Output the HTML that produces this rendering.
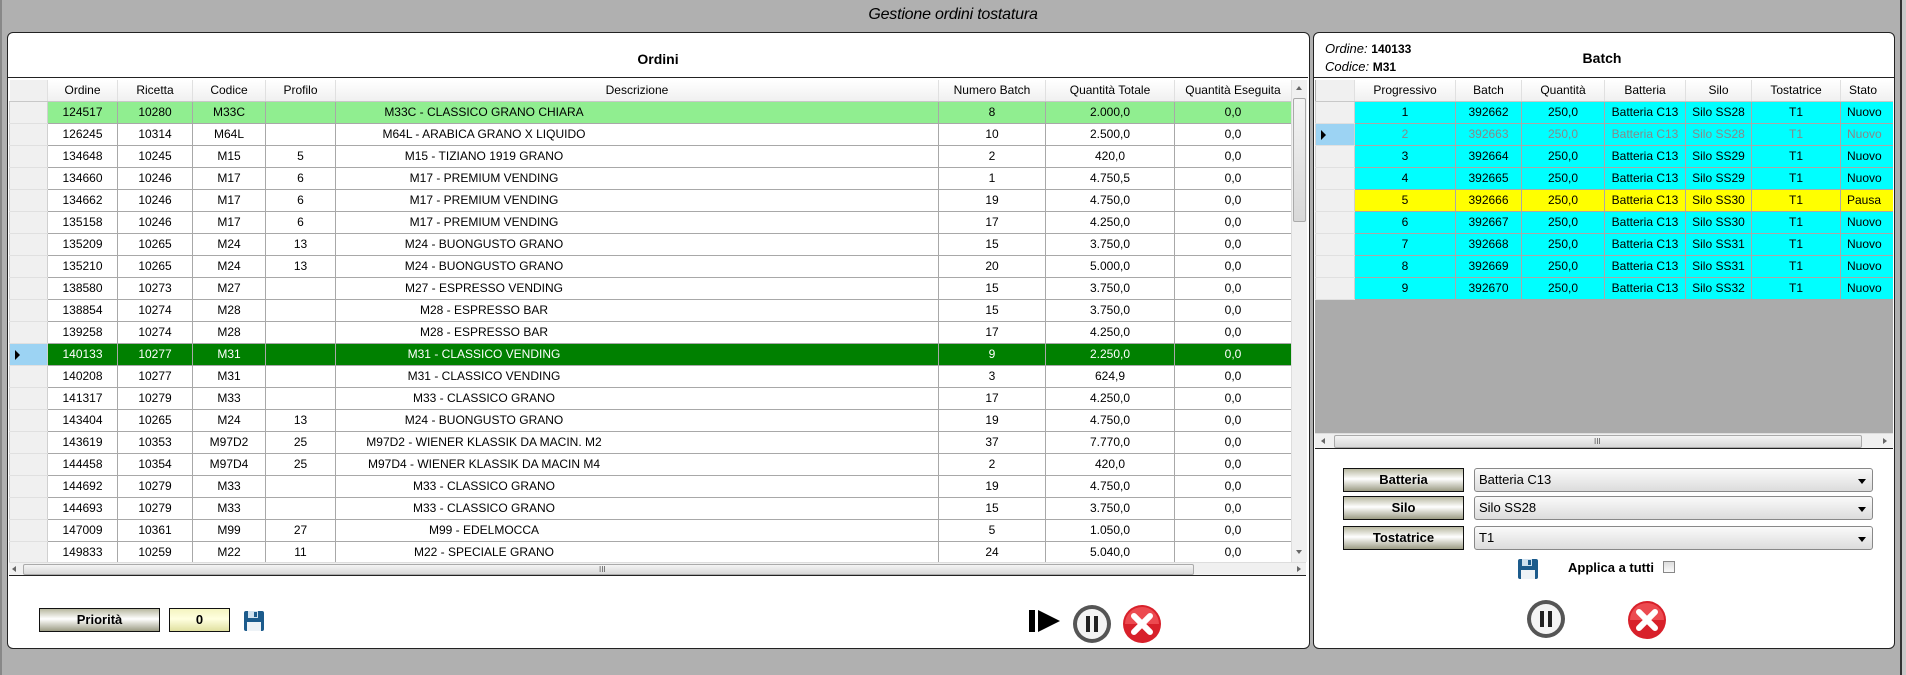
<!DOCTYPE html>
<html><head><meta charset="utf-8">
<style>
*{box-sizing:border-box;margin:0;padding:0}
body{width:1906px;height:675px;background:#b0b0b0;font-family:"Liberation Sans",sans-serif;font-size:12px;color:#000;position:relative;overflow:hidden}
.abs{position:absolute}
.title{left:0;width:1906px;top:6px;text-align:center;font-style:italic;font-size:16px;letter-spacing:-0.2px}
.panel{background:#fff;border:1.5px solid #222;border-radius:6px;overflow:hidden}
table{border-collapse:collapse;table-layout:fixed;position:absolute}
td{border:1px solid #a8a8a8;height:22px;text-align:center;white-space:nowrap;overflow:hidden;padding:0;font-size:12px}
th{font-weight:normal;height:21px;border-right:1px solid #e0e0e0;border-bottom:1px solid #c8c8c8;background:linear-gradient(#fff,#f0f0f0);white-space:nowrap;overflow:hidden;font-size:12px}
td.rh{background:#f0f0f0;border-color:#e0e0e0 #d0d0d0;position:relative}
td.sel{background:#9cd3f3}
td.sel:before{content:"";position:absolute;left:5px;top:6px;border-left:5px solid #000;border-top:5px solid transparent;border-bottom:5px solid transparent}
tr.g td{background:#90ee90}
tr.dg td{background:#008000;color:#fff}
tr.c td{background:#00ffff}
tr.y td{background:#ffff00}
tr.gr td{color:#888}
tr td.rh{background:#f0f0f0;color:#000}
tr td.rh.sel{background:#9cd3f3}
.desc{display:block;width:280px;margin-left:8px;text-align:center}
.hs{background:#f0f0f0;border-top:1px solid #ddd}
.thumb{background:linear-gradient(#f4f4f4,#d8d8d8);border:1px solid #aaa;border-radius:2px}
.btn{border:1.5px solid #111;background:linear-gradient(#b8b8a0,#fff 45%,#9c9c84);font-weight:bold;text-align:center;font-size:13px}
.combo{border:1px solid #888;border-radius:3px;background:linear-gradient(#fafafa,#dcdcdc);padding-left:4px;font-size:13px;line-height:22px}
.combo:after{content:"";position:absolute;right:6px;top:10px;border-top:5px solid #000;border-left:4px solid transparent;border-right:4px solid transparent}
</style></head><body>
<div class="abs title">Gestione ordini tostatura</div>

<div class="abs panel" style="left:7px;top:32px;width:1303px;height:617px">
  <div class="abs" style="left:0;top:0;width:1300px;height:45px;border-bottom:1.5px solid #222;text-align:center;font-weight:bold;font-size:14px;line-height:52px">Ordini</div>
</div>
<div class="abs" style="left:9px;top:80px;width:1282px;height:482px;overflow:hidden;background:#fff">
<table style="left:0;top:0;width:1282px">
<colgroup><col style="width:38px"><col style="width:70px"><col style="width:75px"><col style="width:73px"><col style="width:70px"><col style="width:603px"><col style="width:107px"><col style="width:129px"><col style="width:117px"></colgroup>
<tr><th style="background:#f0f0f0"></th><th>Ordine</th><th>Ricetta</th><th>Codice</th><th>Profilo</th><th>Descrizione</th><th>Numero Batch</th><th>Quantità Totale</th><th>Quantità Eseguita</th></tr>
<tr class="g"><td class="rh"></td><td>124517</td><td>10280</td><td>M33C</td><td></td><td><span class="desc">M33C - CLASSICO GRANO CHIARA</span></td><td>8</td><td>2.000,0</td><td>0,0</td></tr>
<tr><td class="rh"></td><td>126245</td><td>10314</td><td>M64L</td><td></td><td><span class="desc">M64L - ARABICA GRANO X LIQUIDO</span></td><td>10</td><td>2.500,0</td><td>0,0</td></tr>
<tr><td class="rh"></td><td>134648</td><td>10245</td><td>M15</td><td>5</td><td><span class="desc">M15 - TIZIANO 1919 GRANO</span></td><td>2</td><td>420,0</td><td>0,0</td></tr>
<tr><td class="rh"></td><td>134660</td><td>10246</td><td>M17</td><td>6</td><td><span class="desc">M17 - PREMIUM VENDING</span></td><td>1</td><td>4.750,5</td><td>0,0</td></tr>
<tr><td class="rh"></td><td>134662</td><td>10246</td><td>M17</td><td>6</td><td><span class="desc">M17 - PREMIUM VENDING</span></td><td>19</td><td>4.750,0</td><td>0,0</td></tr>
<tr><td class="rh"></td><td>135158</td><td>10246</td><td>M17</td><td>6</td><td><span class="desc">M17 - PREMIUM VENDING</span></td><td>17</td><td>4.250,0</td><td>0,0</td></tr>
<tr><td class="rh"></td><td>135209</td><td>10265</td><td>M24</td><td>13</td><td><span class="desc">M24 - BUONGUSTO GRANO</span></td><td>15</td><td>3.750,0</td><td>0,0</td></tr>
<tr><td class="rh"></td><td>135210</td><td>10265</td><td>M24</td><td>13</td><td><span class="desc">M24 - BUONGUSTO GRANO</span></td><td>20</td><td>5.000,0</td><td>0,0</td></tr>
<tr><td class="rh"></td><td>138580</td><td>10273</td><td>M27</td><td></td><td><span class="desc">M27 - ESPRESSO VENDING</span></td><td>15</td><td>3.750,0</td><td>0,0</td></tr>
<tr><td class="rh"></td><td>138854</td><td>10274</td><td>M28</td><td></td><td><span class="desc">M28 - ESPRESSO BAR</span></td><td>15</td><td>3.750,0</td><td>0,0</td></tr>
<tr><td class="rh"></td><td>139258</td><td>10274</td><td>M28</td><td></td><td><span class="desc">M28 - ESPRESSO BAR</span></td><td>17</td><td>4.250,0</td><td>0,0</td></tr>
<tr class="dg"><td class="rh sel"></td><td>140133</td><td>10277</td><td>M31</td><td></td><td><span class="desc">M31 - CLASSICO VENDING</span></td><td>9</td><td>2.250,0</td><td>0,0</td></tr>
<tr><td class="rh"></td><td>140208</td><td>10277</td><td>M31</td><td></td><td><span class="desc">M31 - CLASSICO VENDING</span></td><td>3</td><td>624,9</td><td>0,0</td></tr>
<tr><td class="rh"></td><td>141317</td><td>10279</td><td>M33</td><td></td><td><span class="desc">M33 - CLASSICO GRANO</span></td><td>17</td><td>4.250,0</td><td>0,0</td></tr>
<tr><td class="rh"></td><td>143404</td><td>10265</td><td>M24</td><td>13</td><td><span class="desc">M24 - BUONGUSTO GRANO</span></td><td>19</td><td>4.750,0</td><td>0,0</td></tr>
<tr><td class="rh"></td><td>143619</td><td>10353</td><td>M97D2</td><td>25</td><td><span class="desc">M97D2 - WIENER KLASSIK DA MACIN. M2</span></td><td>37</td><td>7.770,0</td><td>0,0</td></tr>
<tr><td class="rh"></td><td>144458</td><td>10354</td><td>M97D4</td><td>25</td><td><span class="desc">M97D4 - WIENER KLASSIK DA MACIN M4</span></td><td>2</td><td>420,0</td><td>0,0</td></tr>
<tr><td class="rh"></td><td>144692</td><td>10279</td><td>M33</td><td></td><td><span class="desc">M33 - CLASSICO GRANO</span></td><td>19</td><td>4.750,0</td><td>0,0</td></tr>
<tr><td class="rh"></td><td>144693</td><td>10279</td><td>M33</td><td></td><td><span class="desc">M33 - CLASSICO GRANO</span></td><td>15</td><td>3.750,0</td><td>0,0</td></tr>
<tr><td class="rh"></td><td>147009</td><td>10361</td><td>M99</td><td>27</td><td><span class="desc">M99 - EDELMOCCA</span></td><td>5</td><td>1.050,0</td><td>0,0</td></tr>
<tr><td class="rh"></td><td>149833</td><td>10259</td><td>M22</td><td>11</td><td><span class="desc">M22 - SPECIALE GRANO</span></td><td>24</td><td>5.040,0</td><td>0,0</td></tr>
</table>
</div>
<div class="abs" style="left:1291px;top:80px;width:16px;height:482px;background:#f0f0f0;border-left:1px solid #ddd">
  <div class="abs thumb" style="left:1px;top:18px;width:13px;height:124px"></div>
  <div class="abs" style="left:4px;top:6px;border-bottom:4px solid #666;border-left:3px solid transparent;border-right:3px solid transparent"></div>
  <div class="abs" style="left:4px;top:470px;border-top:4px solid #666;border-left:3px solid transparent;border-right:3px solid transparent"></div>
</div>
<div class="abs hs" style="left:9px;top:562px;width:1297px;height:14px;border-bottom:1.5px solid #222">
  <div class="abs thumb" style="left:14px;top:1px;width:1171px;height:11px"></div>
  <div class="abs" style="left:590px;top:2px;font-size:8px;color:#555">III</div>
  <div class="abs" style="left:3px;top:3px;border-right:4px solid #666;border-top:3px solid transparent;border-bottom:3px solid transparent"></div>
  <div class="abs" style="left:1288px;top:3px;border-left:4px solid #666;border-top:3px solid transparent;border-bottom:3px solid transparent"></div>
</div>

<div class="abs btn" style="left:39px;top:608px;width:121px;height:24px;line-height:21px">Priorità</div>
<div class="abs btn" style="left:169px;top:608px;width:61px;height:24px;line-height:21px;background:linear-gradient(#f4f4c0,#ffffe0 45%,#e0e0a0)">0</div>
<svg class="abs" style="left:243px;top:610px" width="22" height="22" viewBox="0 0 22 22"><rect x="1" y="1" width="20" height="20" rx="2" fill="#1c5b8c"/><rect x="5" y="1" width="10" height="7" fill="#cfe1ef"/><rect x="11" y="2" width="3" height="5" fill="#1c5b8c"/><rect x="4" y="12" width="14" height="9" fill="#eef3f7"/></svg>

<svg class="abs" style="left:1027px;top:606px" width="38" height="30" viewBox="0 0 38 30"><rect x="2" y="4" width="6" height="22" fill="#000"/><polygon points="11,4 33,15 11,26" fill="#000"/></svg>
<svg class="abs" style="left:1071px;top:603px" width="42" height="42" viewBox="0 0 42 42"><circle cx="21" cy="21" r="19" fill="#555"/><circle cx="21" cy="21" r="15" fill="#f4f4f4"/><rect x="15" y="13" width="4" height="16" fill="#222"/><rect x="23" y="13" width="4" height="16" fill="#222"/></svg>
<svg class="abs" style="left:1121px;top:603px" width="42" height="42" viewBox="0 0 42 42"><circle cx="21" cy="21" r="19" fill="#d8202a"/><path d="M4 21 A17 17 0 0 1 38 21Z" fill="#ec4a50"/><path d="M13 13 L29 29 M29 13 L13 29" stroke="#fff" stroke-width="6" stroke-linecap="round"/></svg>

<div class="abs panel" style="left:1313px;top:32px;width:582px;height:617px">
  <div class="abs" style="left:0;top:0;width:580px;height:45px;border-bottom:1.5px solid #222"></div>
</div>
<div class="abs" style="left:1325px;top:41px;font-size:13px"><i>Ordine:</i> <b style="font-size:12px">140133</b></div>
<div class="abs" style="left:1325px;top:59px;font-size:13px"><i>Codice:</i> <b style="font-size:12px">M31</b></div>
<div class="abs" style="left:1560px;top:50px;width:84px;text-align:center;font-weight:bold;font-size:14px">Batch</div>

<div class="abs" style="left:1315px;top:80px;width:578px;height:353px;overflow:hidden;background:#ababab">
<table style="left:0;top:0;width:592px">
<colgroup><col style="width:39px"><col style="width:101px"><col style="width:66px"><col style="width:83px"><col style="width:81px"><col style="width:66px"><col style="width:89px"><col style="width:67px"></colgroup>
<tr><th style="background:#f0f0f0"></th><th>Progressivo</th><th>Batch</th><th>Quantità</th><th>Batteria</th><th>Silo</th><th>Tostatrice</th><th style="text-align:left;padding-left:8px">Stato</th></tr>
<tr class="c"><td class="rh"></td><td>1</td><td>392662</td><td>250,0</td><td>Batteria C13</td><td>Silo SS28</td><td>T1</td><td style="text-align:left;padding-left:6px">Nuovo</td></tr>
<tr class="c gr"><td class="rh sel"></td><td>2</td><td>392663</td><td>250,0</td><td>Batteria C13</td><td>Silo SS28</td><td>T1</td><td style="text-align:left;padding-left:6px">Nuovo</td></tr>
<tr class="c"><td class="rh"></td><td>3</td><td>392664</td><td>250,0</td><td>Batteria C13</td><td>Silo SS29</td><td>T1</td><td style="text-align:left;padding-left:6px">Nuovo</td></tr>
<tr class="c"><td class="rh"></td><td>4</td><td>392665</td><td>250,0</td><td>Batteria C13</td><td>Silo SS29</td><td>T1</td><td style="text-align:left;padding-left:6px">Nuovo</td></tr>
<tr class="y"><td class="rh"></td><td>5</td><td>392666</td><td>250,0</td><td>Batteria C13</td><td>Silo SS30</td><td>T1</td><td style="text-align:left;padding-left:6px">Pausa</td></tr>
<tr class="c"><td class="rh"></td><td>6</td><td>392667</td><td>250,0</td><td>Batteria C13</td><td>Silo SS30</td><td>T1</td><td style="text-align:left;padding-left:6px">Nuovo</td></tr>
<tr class="c"><td class="rh"></td><td>7</td><td>392668</td><td>250,0</td><td>Batteria C13</td><td>Silo SS31</td><td>T1</td><td style="text-align:left;padding-left:6px">Nuovo</td></tr>
<tr class="c"><td class="rh"></td><td>8</td><td>392669</td><td>250,0</td><td>Batteria C13</td><td>Silo SS31</td><td>T1</td><td style="text-align:left;padding-left:6px">Nuovo</td></tr>
<tr class="c"><td class="rh"></td><td>9</td><td>392670</td><td>250,0</td><td>Batteria C13</td><td>Silo SS32</td><td>T1</td><td style="text-align:left;padding-left:6px">Nuovo</td></tr>
</table>
</div>
<div class="abs hs" style="left:1315px;top:433px;width:578px;height:16px;border-bottom:1.5px solid #222">
  <div class="abs thumb" style="left:19px;top:1px;width:528px;height:13px"></div>
  <div class="abs" style="left:279px;top:3px;font-size:8px;color:#555">III</div>
  <div class="abs" style="left:6px;top:4px;border-right:4px solid #666;border-top:3px solid transparent;border-bottom:3px solid transparent"></div>
  <div class="abs" style="left:568px;top:4px;border-left:4px solid #666;border-top:3px solid transparent;border-bottom:3px solid transparent"></div>
</div>

<div class="abs btn" style="left:1343px;top:468px;width:121px;height:24px;line-height:21px">Batteria</div>
<div class="abs btn" style="left:1343px;top:496px;width:121px;height:24px;line-height:21px">Silo</div>
<div class="abs btn" style="left:1343px;top:526px;width:121px;height:24px;line-height:21px">Tostatrice</div>
<div class="abs combo" style="left:1474px;top:468px;width:399px;height:24px">Batteria C13</div>
<div class="abs combo" style="left:1474px;top:496px;width:399px;height:24px">Silo SS28</div>
<div class="abs combo" style="left:1474px;top:526px;width:399px;height:24px">T1</div>
<svg class="abs" style="left:1516px;top:558px" width="24" height="22" viewBox="0 0 22 22"><rect x="1" y="1" width="20" height="20" rx="2" fill="#1c5b8c"/><rect x="5" y="1" width="10" height="7" fill="#cfe1ef"/><rect x="11" y="2" width="3" height="5" fill="#1c5b8c"/><rect x="4" y="12" width="14" height="9" fill="#eef3f7"/></svg>
<div class="abs" style="left:1568px;top:560px;font-weight:bold;font-size:13px">Applica a tutti</div>
<div class="abs" style="left:1663px;top:561px;width:12px;height:12px;border:1px solid #888;background:linear-gradient(#ddd,#fafafa)"></div>

<svg class="abs" style="left:1525px;top:598px" width="42" height="42" viewBox="0 0 42 42"><circle cx="21" cy="21" r="19" fill="#555"/><circle cx="21" cy="21" r="15" fill="#f4f4f4"/><rect x="15" y="13" width="4" height="16" fill="#222"/><rect x="23" y="13" width="4" height="16" fill="#222"/></svg>
<svg class="abs" style="left:1626px;top:599px" width="42" height="42" viewBox="0 0 42 42"><circle cx="21" cy="21" r="19" fill="#d8202a"/><path d="M4 21 A17 17 0 0 1 38 21Z" fill="#ec4a50"/><path d="M13 13 L29 29 M29 13 L13 29" stroke="#fff" stroke-width="6" stroke-linecap="round"/></svg>

<div class="abs" style="left:1900px;top:0;width:2px;height:675px;background:#333"></div>
<div class="abs" style="left:1902px;top:0;width:4px;height:675px;background:#c8c8c8"></div>
<div class="abs" style="left:0;top:0;width:2px;height:675px;background:#888"></div>
</body></html>
